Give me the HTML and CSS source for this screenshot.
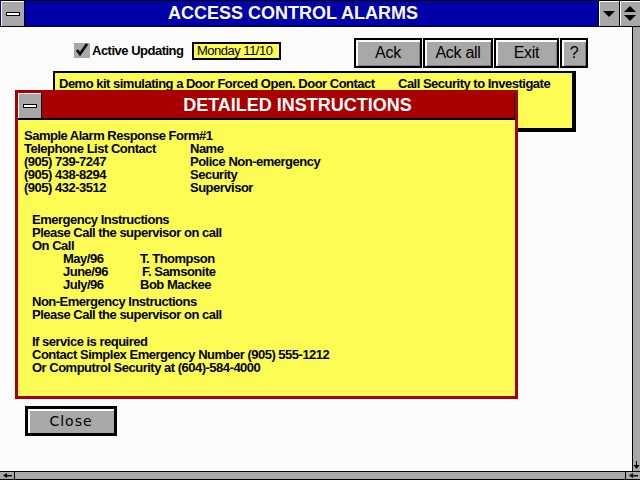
FILE: index.html
```html
<!DOCTYPE html>
<html>
<head>
<meta charset="utf-8">
<link rel="stylesheet" href="styles.css">
</head>
<body>
<div class="app">
  <div class="titlebar">
    <div class="sysmenu"><span class="sysbar"></span></div>
    <div class="title">ACCESS CONTROL ALARMS</div>
    <div class="tbtn">
      <svg width="14" height="10" viewBox="0 0 14 10"><polygon points="1,2 13,2 7,8" fill="#000"/></svg>
    </div>
    <div class="tbtn">
      <svg width="14" height="18" viewBox="0 0 14 18"><polygon points="7,1 13,7 1,7" fill="#000"/><polygon points="1,10 13,10 7,16" fill="#000"/></svg>
    </div>
  </div>
  <div class="middle">
    <div class="content">
      <div class="toolbar">
        <div class="check">
          <span class="checkbox">
            <svg width="14" height="14" viewBox="0 0 14 14"><path d="M2,7 L5,11 L12,1" fill="none" stroke="#000" stroke-width="2.6"/></svg>
          </span>
          <span class="checklabel">Active Updating</span>
        </div>
        <span class="date">Monday 11/10</span>
        <div class="buttons">
          <button class="btn btn-ack">Ack</button>
          <button class="btn btn-ackall">Ack all</button>
          <button class="btn btn-exit">Exit</button>
          <button class="btn btn-help">?</button>
        </div>
      </div>
      <div class="alarm">
        <span class="alarm-desc">Demo kit simulating a Door Forced Open. Door Contact</span>
        <span class="alarm-action">Call Security to Investigate</span>
      </div>
    </div>
    <div class="vscroll">
      <div class="vtrack"></div>
      <div class="varrow">
        <svg width="7" height="9" viewBox="0 0 7 9"><rect x="3" y="0" width="1" height="5" fill="#000"/><polygon points="0.5,4 6.5,4 3.5,8" fill="#000"/></svg>
      </div>
    </div>
  </div>
  <div class="hscroll">
    <div class="harrow">
      <svg width="9" height="5" viewBox="0 0 9 5"><polygon points="0,2.5 4,0 4,5" fill="#000"/><rect x="3" y="2" width="6" height="1.4" fill="#000"/></svg>
    </div>
    <div class="htrack"></div>
    <div class="harrow harrow-right">
      <svg width="9" height="5" viewBox="0 0 9 5"><polygon points="0,2.5 4,0 4,5" fill="#000"/><rect x="3" y="2" width="6" height="1.4" fill="#000"/></svg>
    </div>
  </div>

  <div class="dialog-layer">
    <div class="dialog">
      <div class="dtitlebar">
        <div class="dsysmenu"><span class="sysbar"></span></div>
        <div class="dtitle">DETAILED INSTRUCTIONS</div>
      </div>
      <div class="dbody">
        <div class="block">
          <div>Sample Alarm Response Form#1</div>
          <div class="row"><span class="c1">Telephone List Contact</span><span>Name</span></div>
          <div class="row"><span class="c1">(905) 739-7247</span><span>Police Non-emergency</span></div>
          <div class="row"><span class="c1">(905) 438-8294</span><span>Security</span></div>
          <div class="row"><span class="c1">(905) 432-3512</span><span>Supervisor</span></div>
        </div>
        <div class="block indent gap1">
          <div>Emergency Instructions</div>
          <div>Please Call the supervisor on call</div>
          <div>On Call</div>
          <div class="row oncall"><span class="c2">May/96</span><span>T. Thompson</span></div>
          <div class="row oncall"><span class="c2">June/96</span><span class="nudge">F. Samsonite</span></div>
          <div class="row oncall"><span class="c2">July/96</span><span>Bob Mackee</span></div>
        </div>
        <div class="block indent gap2">
          <div>Non-Emergency Instructions</div>
          <div>Please Call the supervisor on call</div>
        </div>
        <div class="block indent gap3">
          <div>If service is required</div>
          <div>Contact Simplex Emergency Number (905) 555-1212</div>
          <div>Or Computrol Security at (604)-584-4000</div>
        </div>
      </div>
    </div>
    <button class="close">Close</button>
  </div>
</div>
</body>
</html>
```

FILE: styles.css
```css
* { box-sizing: border-box; }
html, body { margin: 0; padding: 0; }
body {
  width: 640px;
  height: 480px;
  overflow: hidden;
  background: #fcfcfc;
  font-family: "Liberation Sans", Arial, sans-serif;
}
.app {
  position: relative;
  width: 640px;
  height: 480px;
  display: flex;
  flex-direction: column;
  background: #fcfcfc;
}

/* main title bar */
.titlebar {
  height: 27px;
  flex: none;
  display: flex;
  background: #0000a8;
  border-top: 1px solid #000;
  border-bottom: 1px solid #000;
}
.sysmenu {
  width: 24px;
  margin-left: 1px;
  background: #a8a8a8;
  border-right: 1px solid #000;
  box-shadow: inset 1px 1px 0 #fcfcfc;
  display: flex;
  align-items: center;
  justify-content: center;
}
.sysbar {
  display: block;
  width: 14px;
  height: 4px;
  background: #fcfcfc;
  border: 1px solid #000;
}
.title {
  flex: 1;
  text-align: center;
  color: #fcfcfc;
  font-weight: bold;
  font-size: 18px;
  line-height: 25px;
  padding-right: 37px;
}
.tbtn {
  width: 21px;
  background: #a8a8a8;
  border-left: 1px solid #000;
  box-shadow: inset 1px 1px 0 #fcfcfc;
  display: flex;
  align-items: center;
  justify-content: center;
}

/* middle area */
.middle {
  flex: 1;
  display: flex;
  min-height: 0;
}
.content {
  flex: 1;
  display: flex;
  flex-direction: column;
}
.toolbar {
  display: flex;
  align-items: flex-start;
  padding: 11px 0 0 74px;
  height: 43px;
}
.check {
  display: flex;
  align-items: center;
  width: 118px;
  margin-top: 3px;
  height: 18px;
}
.checkbox {
  width: 16px;
  height: 15px;
  background: #a8a8a8;
  display: flex;
  align-items: center;
  justify-content: center;
}
.checklabel {
  margin-left: 2px;
  font-weight: bold;
  font-size: 13px;
  letter-spacing: -0.5px;
  white-space: nowrap;
  color: #000;
}
.date {
  margin-top: 4px;
  height: 18px;
  width: 89px;
  flex: none;
  background: #fcfc54;
  border: 2px solid #000;
  font-size: 13px;
  letter-spacing: -0.5px;
  line-height: 14px;
  padding-left: 3px;
  white-space: nowrap;
  color: #000;
}
.buttons {
  display: flex;
  margin-left: 73px;
  gap: 1px;
}
.btn {
  height: 30px;
  padding: 0;
  background: #a8a8a8;
  border: 2px solid #000;
  box-shadow: inset 2px 2px 0 #fcfcfc, inset -1px -1px 0 #808080;
  font-family: "Liberation Sans", Arial, sans-serif;
  font-size: 16px;
  letter-spacing: -0.3px;
  color: #000;
  line-height: 26px;
  white-space: nowrap;
}
.btn-ack { width: 68px; }
.btn-ackall { width: 70px; }
.btn-exit { width: 65px; }
.btn-help { width: 28px; }

.alarm {
  margin: 1px 0 0 53px;
  width: 523px;
  height: 61px;
  background: #fcfc54;
  border-style: solid;
  border-color: #000;
  border-width: 2px 4px 4px 2px;
  padding: 3px 0 0 4px;
  font-weight: bold;
  font-size: 13px;
  letter-spacing: -0.5px;
  color: #000;
  display: flex;
  white-space: nowrap;
}
.alarm-desc { width: 339px; flex: none; }

/* scrollbars */
.vscroll {
  width: 8px;
  flex: none;
  display: flex;
  flex-direction: column;
  border-left: 1px solid #000;
}
.vtrack { flex: 1; background: #a8a8a8; }
.varrow {
  height: 11px;
  background: #a8a8a8;
  display: flex;
  align-items: center;
  justify-content: center;
}
.hscroll {
  height: 9px;
  flex: none;
  display: flex;
  border-top: 1px solid #000;
  border-bottom: 1px solid #000;
}
.harrow {
  width: 15px;
  background: #a8a8a8;
  display: flex;
  align-items: center;
  justify-content: center;
  border-right: 1px solid #000;
}
.harrow-right {
  width: 15px;
  border-right: none;
  border-left: 1px solid #000;
}
.htrack { flex: 1; background: #a8a8a8; }

/* detailed instructions dialog */
.dialog-layer {
  position: absolute;
  left: 15px;
  top: 90px;
  width: 503px;
  display: flex;
  flex-direction: column;
}
.dialog {
  width: 503px;
  height: 309px;
  border: 3px solid #a80000;
  background: #fcfc54;
  display: flex;
  flex-direction: column;
}
.dtitlebar {
  height: 27px;
  flex: none;
  display: flex;
  background: #a80000;
  border-bottom: 2px solid #000;
  border-right: 1px solid #000;
}
.dsysmenu {
  width: 24px;
  height: 25px;
  background: #a8a8a8;
  border-right: 1px solid #000;
  box-shadow: inset 1px 1px 0 #fcfcfc;
  display: flex;
  align-items: center;
  justify-content: center;
}
.dtitle {
  flex: 1;
  text-align: center;
  color: #fcfcfc;
  font-weight: bold;
  font-size: 18px;
  line-height: 25px;
  padding-left: 39px;
}
.dbody {
  padding: 9px 0 0 6px;
  font-weight: bold;
  font-size: 13px;
  letter-spacing: -0.5px;
  line-height: 13px;
  color: #000;
  white-space: nowrap;
}
.row { display: flex; }
.c1 { width: 166px; flex: none; }
.indent { padding-left: 8px; }
.gap1 { margin-top: 19px; }
.gap2 { margin-top: 4px; }
.gap3 { margin-top: 14px; }
.oncall { padding-left: 31px; }
.c2 { width: 77px; flex: none; }
.nudge { margin-left: 2px; }

.close {
  margin: 7px 0 0 10px;
  width: 92px;
  height: 30px;
  padding: 0;
  background: #a8a8a8;
  border: 3px solid #000;
  box-shadow: inset 2px 2px 0 #fcfcfc;
  font-family: "DejaVu Sans", sans-serif;
  font-size: 14px;
  letter-spacing: 1px;
  color: #000;
  line-height: 22px;
}
```
